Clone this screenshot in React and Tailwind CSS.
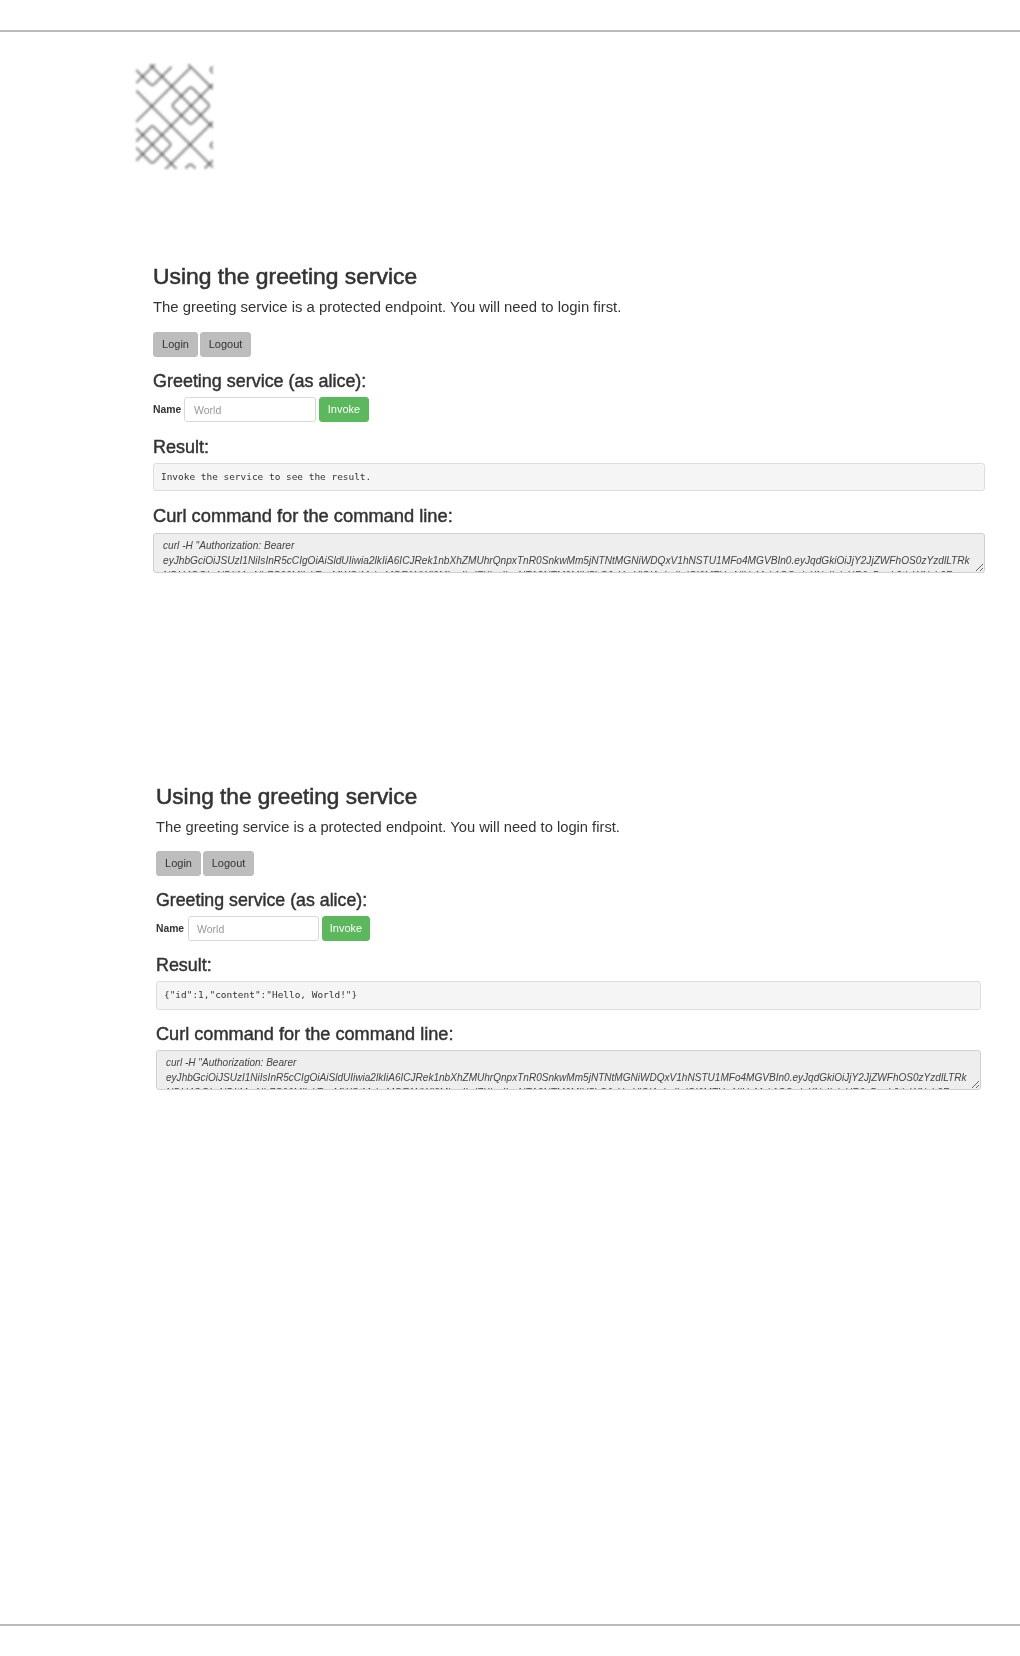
const TOKEN_2 = "eyJhbGciOiJSUzI1NiIsInR5cCIgOiAiSldUIiwia2lkIiA6ICJRek1nbXhZMUhrQnpxTnR0SnkwMm5jNTNtMGNiWDQxV1hNSTU1MFo4MGVBIn0.eyJqdGkiOiJjY2JjZWFhOS0zYzdlLTRk";
const TOKEN_3 = "NDU4OGIwNDItMmNhZC00MjIxLTgxMWQtMzlmMGE1NWI3MjcwIiwiZXhwIjoxNTA2NTM0MjU5LCJuYmYiOjAsImlhdCI6MTUwNjUzMzk1OSwiaXNzIjoiaHR0cDovL2tleWNsb2Fr";
const CURL = `curl -H "Authorization: Bearer\n${TOKEN_2}\n${TOKEN_3}`;

const LINES = [
  "M90,42 L280,232",
  "M155,49 L103,101 Q97,107 91,101 L48,58",
  "M105,41 L48,98",
  "M212,51 L48,215",
  "M205,41 L280,116",
  "M48,120 L280,352",
  "M161,160 L207,114 Q213,108 219,114 L265,160 Q271,166 265,172 L219,218 Q213,224 207,218 L161,172 Q155,166 161,160Z",
  "M155,225 L280,100",
  "M280,214 L130,364",
  "M155,225 L48,332",
  "M48,274 L91,231 Q97,225 103,231 L149,277 Q155,283 149,289 L103,335 Q97,341 91,335 L48,292",
  "M48,234 L170,356",
  "M197,355 L206,346 Q212,340 218,346 L227,355",
  "M280,330 L255,355",
  "M280,275 L276,279 Q270,285 276,291 L280,295",
  "M280,48 L276,52 Q270,58 276,64 L280,68",
];

function Logo() {
  return (
    <svg width="77" height="105" viewBox="48 42 232 313" className="block blur-[1px]">
      {LINES.map((d) => (
        <path key={d} d={d} fill="none" stroke="#3d3d3d" strokeOpacity="0.52" strokeWidth="7.5" />
      ))}
    </svg>
  );
}

const first = {
  wrap: "ml-[153px] w-[832px] mt-[94px]",
  h1: "text-[22.85px] leading-[26px]",
  p: "text-[14.87px] leading-[20px] mt-[8px]",
  btnRow: "mt-[15px] gap-[2px]",
  login: "w-[45px] h-[25px]",
  logout: "w-[51px] h-[25px]",
  h2: "text-[17.95px] mt-[14px]",
  form: "mt-[6px]",
  name: "w-[31px] text-[10.4px]",
  input: "w-[132px] h-[25px] pl-[9px]",
  invoke: "w-[50px] h-[25px] ml-[3px]",
  h3: "text-[18px] mt-[15px]",
  pre: "h-[28px] mt-[6px] pl-[7px] text-[9.45px]",
  h4: "text-[18.3px] mt-[15px]",
  ta: "h-[40px] mt-[7px] text-[10.15px] pl-[9px]",
};

const second = {
  wrap: "ml-[156px] w-[825px] mt-[211px]",
  h1: "text-[22.6px] leading-[26px]",
  p: "text-[14.73px] leading-[20px] mt-[7px]",
  btnRow: "mt-[14px] gap-[2px]",
  login: "w-[45px] h-[25px]",
  logout: "w-[51px] h-[25px]",
  h2: "text-[17.75px] mt-[14px]",
  form: "mt-[6px]",
  name: "w-[32px] text-[10.3px]",
  input: "w-[131px] h-[25px] pl-[8px]",
  invoke: "w-[48px] h-[25px] ml-[3px]",
  h3: "text-[17.9px] mt-[14px]",
  pre: "h-[29px] mt-[6px] pl-[7px] text-[9.45px]",
  h4: "text-[18.15px] mt-[14px]",
  ta: "h-[40px] mt-[6px] text-[10.05px] pl-[9px]",
};

function SubHeading({ className, children }) {
  return <h2 className={`font-normal text-[#333] [-webkit-text-stroke:0.45px_#333] leading-[20px] ${className}`}>{children}</h2>;
}

function Block({ c, result }) {
  return (
    <section className={`blur-[0.5px] ${c.wrap}`}>
      <h1 className={`font-normal text-[#333] [-webkit-text-stroke:0.55px_#333] ${c.h1}`}>Using the greeting service</h1>
      <p className={`text-[#333] ${c.p}`}>The greeting service is a protected endpoint. You will need to login first.</p>
      <div className={`flex ${c.btnRow}`}>
        <button className={`rounded-[3px] bg-[#bdbdbd] border border-[#bbb] text-[#333] text-[11px] ${c.login}`}>Login</button>
        <button className={`rounded-[3px] bg-[#bdbdbd] border border-[#bbb] text-[#333] text-[11px] ${c.logout}`}>Logout</button>
      </div>
      <SubHeading className={c.h2}>Greeting service (as alice):</SubHeading>
      <div className={`flex items-center ${c.form}`}>
        <label className={`font-bold text-[#333] ${c.name}`}>Name</label>
        <input
          placeholder="World"
          className={`rounded-[3px] border border-[#d8d8d8] bg-white text-[10.5px] placeholder:text-[#999] ${c.input}`}
        />
        <button className={`rounded-[3px] bg-[#5cb85c] border border-[#5cb85c] text-white text-[11px] ${c.invoke}`}>Invoke</button>
      </div>
      <SubHeading className={c.h3}>Result:</SubHeading>
      <pre className={`flex items-center rounded-[3px] border border-[#ddd] bg-[#f5f5f5] text-[#333] font-['DejaVu_Sans_Mono',monospace] ${c.pre}`}>{result}</pre>
      <SubHeading className={c.h4}>Curl command for the command line:</SubHeading>
      <textarea
        readOnly
        wrap="off"
        value={CURL}
        className={`block w-full overflow-hidden resize rounded-[3px] border border-[#d0d0d0] bg-[#eee] italic leading-[15px] text-[#444] pt-[4px] ${c.ta}`}
      />
    </section>
  );
}

export default function App() {
  return (
    <div className="flex flex-col h-[1656px] bg-white font-['Liberation_Sans',Arial,sans-serif]">
      <div className="mt-[30px] h-[2px] bg-[#bbb]" />
      <div className="ml-[136px] mt-[32px]">
        <Logo />
      </div>
      <Block c={first} result="Invoke the service to see the result." />
      <Block c={second} result={'{"id":1,"content":"Hello, World!"}'} />
      <div className="mt-auto mb-[30px] h-[2px] bg-[#bbb]" />
    </div>
  );
}
